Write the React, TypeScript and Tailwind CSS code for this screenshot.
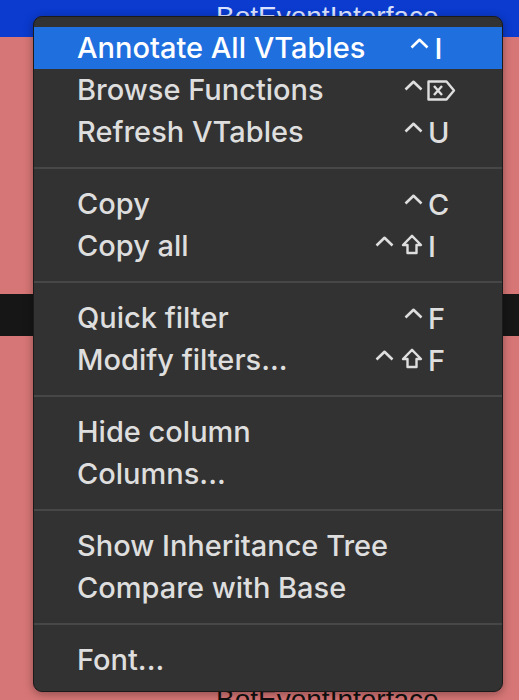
import React from "react";

type Item = {
  label: string;
  mods?: ("ctrl" | "shift")[];
  key?: string;
  del?: boolean;
  active?: boolean;
};

const groups: Item[][] = [
  [
    { label: "Annotate All VTables", mods: ["ctrl"], key: "I", active: true },
    { label: "Browse Functions", mods: ["ctrl"], del: true },
    { label: "Refresh VTables", mods: ["ctrl"], key: "U" },
  ],
  [
    { label: "Copy", mods: ["ctrl"], key: "C" },
    { label: "Copy all", mods: ["ctrl", "shift"], key: "I" },
  ],
  [
    { label: "Quick filter", mods: ["ctrl"], key: "F" },
    { label: "Modify filters...", mods: ["ctrl", "shift"], key: "F" },
  ],
  [{ label: "Hide column" }, { label: "Columns..." }],
  [{ label: "Show Inheritance Tree" }, { label: "Compare with Base" }],
  [{ label: "Font..." }],
];

function Ctrl() {
  return (
    <svg width="19" height="11" viewBox="0 0 19 11" fill="none">
      <path d="M1.5 9.5 L9.5 1.8 L17.5 9.5" stroke="currentColor" strokeWidth="2.6" strokeLinejoin="round" />
    </svg>
  );
}

function Shift() {
  return (
    <svg width="22" height="21" viewBox="0 0 22 21" fill="none">
      <path
        d="M11 1.8 L20 11 H15.5 V19 H6.5 V11 H2 Z"
        stroke="currentColor"
        strokeWidth="2.4"
        strokeLinejoin="round"
      />
    </svg>
  );
}

function DeleteKey() {
  return (
    <svg width="29" height="21" viewBox="0 0 29 21" fill="none">
      <path
        d="M1.5 1.5 H19.5 L27 10.5 L19.5 19.5 H1.5 Z"
        stroke="currentColor"
        strokeWidth="2.4"
        strokeLinejoin="round"
      />
      <path d="M7 6 L15 15 M15 6 L7 15" stroke="currentColor" strokeWidth="2.4" />
    </svg>
  );
}

function MenuRow({ item }: { item: Item }) {
  return (
    <div
      className={
        "flex h-[42px] items-center pl-[43px] pr-[30px] " +
        (item.active ? "bg-[#1f6fdf] text-white" : "text-[#dedede]")
      }
    >
      <span className="flex-1 whitespace-nowrap">{item.label}</span>
      {item.mods && (
        <div className="flex items-center">
          <div className="flex h-[22px] w-[64px] items-start justify-end gap-[7px]">
            {item.mods.map((m, i) =>
              m === "ctrl" ? (
                <span key={i} className="pt-[1px]">
                  <Ctrl />
                </span>
              ) : (
                <span key={i} className="-mt-[1px]">
                  <Shift />
                </span>
              )
            )}
          </div>
          <div className="ml-[5px] flex h-[22px] w-[44px] items-center">
            {item.del ? (
              <span className="-ml-[1px]">
                <DeleteKey />
              </span>
            ) : (
              <span className="leading-none">{item.key}</span>
            )}
          </div>
        </div>
      )}
    </div>
  );
}

export default function App() {
  return (
    <div className="relative h-[700px] w-[519px] overflow-hidden bg-[#d77676] font-['Liberation_Sans',sans-serif]">
      {/* window behind the menu */}
      <div className="flex h-full flex-col">
        <div className="h-[37px] shrink-0 bg-[#0b3bcf] pl-[216px] pt-[1px] text-[28px] leading-[32px] text-[#dbe3ff]">
          BotEventInterface
        </div>
        <div className="h-[257px] shrink-0" />
        <div className="h-[42px] shrink-0 bg-[#161616]" />
        <div className="min-h-0 flex-1 pl-[216px] pt-[348px] text-[28px] leading-[32px] text-[#111]">
          BotEventInterface
        </div>
      </div>

      {/* context menu */}
      <div className="absolute left-[33px] top-[16px] w-[470px] rounded-[9px] border border-[#1a1a1a] bg-[#323232] py-[10px] font-['Inter',sans-serif] text-[29px] font-medium shadow-[0_2px_10px_rgba(0,0,0,0.35)]">
        {groups.map((g, gi) => (
          <div key={gi}>
            {gi > 0 && (
              <div className="flex h-[30px] items-center">
                <div className="h-[2px] w-full bg-[#474747]" />
              </div>
            )}
            {g.map((item) => (
              <MenuRow key={item.label} item={item} />
            ))}
          </div>
        ))}
      </div>
    </div>
  );
}
